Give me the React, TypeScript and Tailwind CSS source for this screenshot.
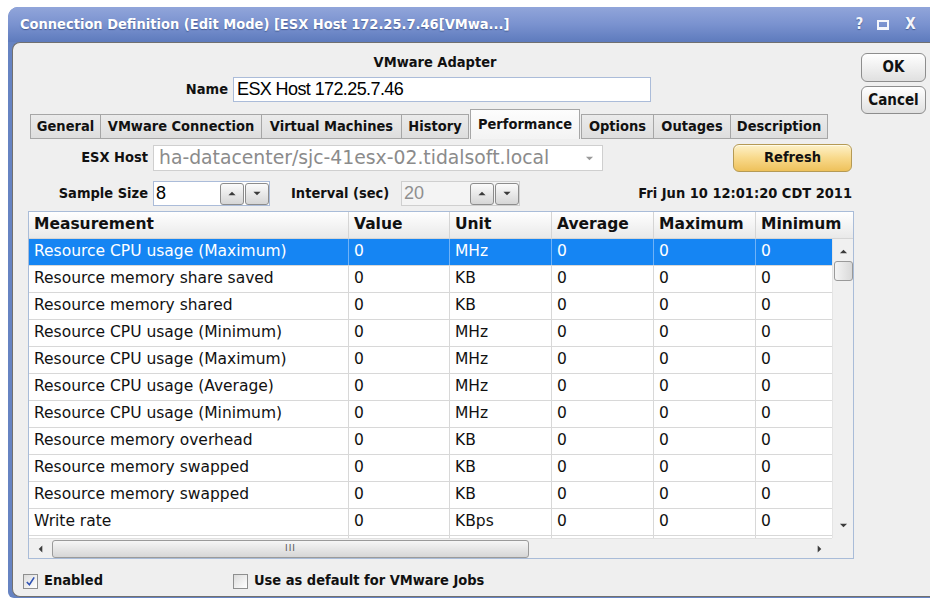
import React from 'react';

const rows: [string, string][] = [
  ['Resource CPU usage (Maximum)', 'MHz'],
  ['Resource memory share saved', 'KB'],
  ['Resource memory shared', 'KB'],
  ['Resource CPU usage (Minimum)', 'MHz'],
  ['Resource CPU usage (Maximum)', 'MHz'],
  ['Resource CPU usage (Average)', 'MHz'],
  ['Resource CPU usage (Minimum)', 'MHz'],
  ['Resource memory overhead', 'KB'],
  ['Resource memory swapped', 'KB'],
  ['Resource memory swapped', 'KB'],
  ['Write rate', 'KBps'],
  ['', ''],
];

const tabs = [
  { label: 'General', w: 'w-[71px]' },
  { label: 'VMware Connection', w: 'w-[162px]' },
  { label: 'Virtual Machines', w: 'w-[141px]' },
  { label: 'History', w: 'w-[68px]' },
  { label: 'Performance', w: 'w-[110px]', active: true },
  { label: 'Options', w: 'w-[73px]' },
  { label: 'Outages', w: 'w-[78px]' },
  { label: 'Description', w: 'w-[98px]' },
];

const Tri = ({ dir, className = '' }: { dir: 'up' | 'down' | 'left' | 'right'; className?: string }) => {
  const pts = {
    up: '0,6 5,1 10,6',
    down: '0,1 5,6 10,1',
    left: '6,0 1,5 6,10',
    right: '1,0 6,5 1,10',
  }[dir];
  const box = dir === 'up' || dir === 'down' ? '0 0 10 7' : '0 0 7 10';
  return (
    <svg viewBox={box} className={className}>
      <polygon points={pts} fill="currentColor" />
    </svg>
  );
};

const SpinButton = ({ dir }: { dir: 'up' | 'down' }) => (
  <div className="w-[24px] h-[22px] rounded-[3px] border border-[#8c8c8c] bg-gradient-to-b from-[#fbfbfb] to-[#d6d6d6] flex items-center justify-center text-[#3a3a3a]">
    <Tri dir={dir} className="w-[8px] h-[5px]" />
  </div>
);

const Checkbox = ({ checked }: { checked?: boolean }) => (
  <div className="w-[15px] h-[15px] border border-[#8e8f8f] bg-gradient-to-br from-[#dcdcdc] to-[#ffffff] flex items-center justify-center">
    {checked && (
      <svg viewBox="0 0 12 12" className="w-[11px] h-[11px]">
        <path d="M2 6.5 L4.8 9.5 L10 1.5" fill="none" stroke="#3154b4" strokeWidth="1.8" />
      </svg>
    )}
  </div>
);

export default function App() {
  const ui = "font-['DejaVu_Sans_Condensed',sans-serif]";
  const label = 'font-bold text-[14.5px] text-[#111]';
  return (
    <div className={`w-[930px] h-[600px] bg-white overflow-hidden ${ui}`}>
      <div className="ml-[8px] mt-[7px] w-[940px] h-[591px] rounded-tl-[10px] rounded-bl-[6px] bg-[#6683c2] flex flex-col overflow-hidden">
        {/* title bar */}
        <div className="h-[35px] shrink-0 bg-gradient-to-b from-[#91a5da] via-[#7a92cf] to-[#5e7bbd] flex items-center pl-[12px] text-white font-bold text-[14.5px] [text-shadow:0_1px_1px_rgba(40,60,110,0.6)]">
          <span>Connection Definition (Edit Mode) [ESX Host 172.25.7.46[VMwa...]</span>
          <div className="ml-[346px] flex items-center text-[15px] text-[#f4f6fb]">
            <span>?</span>
            <span className="ml-[14px] w-[12px] h-[10px] border-[2px] border-[#f4f6fb] border-b-[3px] block" />
            <span className="ml-[16px]">X</span>
          </div>
        </div>

        {/* panel */}
        <div className="ml-[4px] h-[555px] border-l border-t border-b border-[#707070] rounded-l-[8px] bg-[#efefef] flex">
          <div className="w-[844px] shrink-0 flex flex-col">
            <div className={`mt-[11px] text-center leading-[17px] ${label}`}>VMware Adapter</div>

            <div className="mt-[6px] flex items-center h-[25px]">
              <div className={`w-[215px] text-right ${label}`}>Name</div>
              <div className="ml-[5px] w-[418px] h-[25px] bg-white border border-[#abbcd9] flex items-center pl-[3px] font-['Liberation_Sans',sans-serif] text-[18px] tracking-[-0.6px] text-black">
                ESX Host 172.25.7.46
              </div>
            </div>

            {/* tabs */}
            <div className="mt-[7px] ml-[18px] h-[30px] flex items-end">
              {tabs.map((t) =>
                t.active ? (
                  <div
                    key={t.label}
                    className={`${t.w} h-[30px] ml-[1px] mr-[2px] bg-gradient-to-b from-[#fdfdfd] to-[#f3f3f3] border border-b-0 border-[#a6a6a6] flex items-start justify-center pt-[4px] ${label}`}
                  >
                    {t.label}
                  </div>
                ) : (
                  <div
                    key={t.label}
                    className={`${t.w} h-[25px] bg-gradient-to-b from-[#ebebeb] to-[#dedede] border border-[#a6a6a6] -ml-[1px] flex items-center justify-center ${label}`}
                  >
                    {t.label}
                  </div>
                )
              )}
            </div>

            {/* ESX host row */}
            <div className="mt-[5px] h-[28px] flex items-center">
              <div className={`w-[135px] text-right ${label}`}>ESX Host</div>
              <div className="ml-[5px] w-[450px] h-[26px] bg-white border border-[#cfcfcf] flex items-center pl-[5px] pr-[8px] font-['DejaVu_Sans',sans-serif] text-[18.8px] text-[#8b8b8b]">
                <span>ha-datacenter/sjc-41esx-02.tidalsoft.local</span>
                <Tri dir="down" className="ml-auto text-[#9a9a9a] w-[9px] h-[5px]" />
              </div>
              <div className={`ml-auto mr-[5px] w-[119px] h-[28px] rounded-[6px] border border-[#b59a55] bg-gradient-to-b from-[#fdf1c8] via-[#f8d98a] to-[#eec15a] flex items-center justify-center shadow-[inset_0_1px_0_#fffbe8] ${label}`}>
                Refresh
              </div>
            </div>

            {/* sample size row */}
            <div className="mt-[9px] h-[25px] flex items-center">
              <div className={`w-[135px] text-right ${label}`}>Sample Size</div>
              <div className="ml-[5px] w-[117px] h-[25px] bg-white border border-[#abbcd9] flex items-center pl-[2px] font-['Liberation_Sans',sans-serif] text-[18px] text-black">
                <span>8</span>
                <div className="ml-auto flex gap-[1px]">
                  <SpinButton dir="up" />
                  <SpinButton dir="down" />
                </div>
              </div>
              <div className={`ml-[21px] w-[105px] ${label}`}>Interval (sec)</div>
              <div className="ml-[5px] w-[119px] h-[25px] bg-[#f4f4f4] border border-[#cfcfcf] flex items-center pl-[2px] font-['Liberation_Sans',sans-serif] text-[18px] text-[#8f8f8f]">
                <span>20</span>
                <div className="ml-auto flex gap-[1px]">
                  <SpinButton dir="up" />
                  <SpinButton dir="down" />
                </div>
              </div>
              <div className={`ml-auto mr-[5px] ${label}`}>Fri Jun 10 12:01:20 CDT 2011</div>
            </div>

            {/* measurement table */}
            <div className="mt-[5px] ml-[15px] w-[826px] h-[348px] border border-[#a9bcd8] bg-white flex flex-col font-['DejaVu_Sans',sans-serif]">
              <div className="h-[27px] shrink-0 flex bg-gradient-to-b from-[#ffffff] to-[#e9e9e9] border-b border-[#d5d5d5] font-bold text-[15.5px] text-[#111]">
                <div className="w-[320px] pl-[5px] flex items-center border-r border-[#d5d5d5]">Measurement</div>
                <div className="w-[101px] pl-[5px] flex items-center border-r border-[#d5d5d5]">Value</div>
                <div className="w-[102px] pl-[5px] flex items-center border-r border-[#d5d5d5]">Unit</div>
                <div className="w-[102px] pl-[5px] flex items-center border-r border-[#d5d5d5]">Average</div>
                <div className="w-[102px] pl-[5px] flex items-center border-r border-[#d5d5d5]">Maximum</div>
                <div className="flex-1 pl-[5px] flex items-center">Minimum</div>
              </div>

              <div className="h-[299px] flex">
                <div className="w-[803px] overflow-hidden">
                  {rows.map(([name, unit], i) => {
                    const sel = i === 0;
                    const cell = `pl-[5px] flex items-center border-r ${sel ? 'border-[#6fb2f7]' : 'border-[#d8d8d8]'}`;
                    const v = name ? '0' : '';
                    return (
                      <div
                        key={i}
                        className={`h-[27px] flex text-[15.5px] border-b border-[#d8d8d8] ${sel ? 'bg-[#1585f3] text-white' : 'text-[#111]'}`}
                      >
                        <div className={`w-[320px] ${cell}`}>{name}</div>
                        <div className={`w-[101px] ${cell}`}>{v}</div>
                        <div className={`w-[102px] ${cell}`}>{unit}</div>
                        <div className={`w-[102px] ${cell}`}>{v}</div>
                        <div className={`w-[102px] ${cell}`}>{v}</div>
                        <div className="w-[76px] pl-[5px] flex items-center">{v}</div>
                      </div>
                    );
                  })}
                </div>
                {/* vertical scrollbar */}
                <div className="w-[21px] bg-[#f0f0f0] border-l border-[#e4e4e4] flex flex-col items-center">
                  <Tri dir="up" className="mt-[10px] text-[#3c3c3c] w-[9px] h-[5px]" />
                  <div className="mt-[7px] w-[19px] h-[20px] rounded-[3px] border border-[#9a9a9a] bg-gradient-to-r from-[#f4f4f4] to-[#d9d9d9]" />
                  <Tri dir="down" className="mt-auto mb-[10px] text-[#3c3c3c] w-[9px] h-[5px]" />
                </div>
              </div>

              {/* horizontal scrollbar */}
              <div className="h-[20px] flex">
                <div className="w-[803px] bg-[#f0f0f0] border-t border-[#e0e0e0] flex items-center">
                  <Tri dir="left" className="ml-[9px] text-[#3c3c3c] w-[5px] h-[8px]" />
                  <div className="ml-[9px] w-[477px] h-[18px] rounded-[3px] border border-[#9a9a9a] bg-gradient-to-b from-[#f6f6f6] to-[#d6d6d6] flex items-center justify-center">
                    <span className="text-[9px] tracking-[1px] text-[#555] leading-none">III</span>
                  </div>
                  <Tri dir="right" className="ml-auto mr-[10px] text-[#3c3c3c] w-[5px] h-[8px]" />
                </div>
                <div className="flex-1 bg-[#f0f0f0]" />
              </div>
            </div>

            {/* checkboxes */}
            <div className="mt-[13px] h-[18px] flex items-center">
              <div className="ml-[10px]"><Checkbox checked /></div>
              <span className={`ml-[6px] ${label}`}>Enabled</span>
              <div className="ml-[130px]"><Checkbox /></div>
              <span className={`ml-[6px] ${label}`}>Use as default for VMware Jobs</span>
            </div>
          </div>

          {/* OK / Cancel */}
          <div className="flex flex-col ml-[4px] mt-[10px] gap-[4px]">
            <div className="w-[65px] h-[29px] rounded-[6px] border border-[#8d8d8d] bg-gradient-to-b from-[#ffffff] to-[#e0e0e0] flex items-center justify-center font-bold text-[15px] text-[#111]">OK</div>
            <div className="w-[65px] h-[28px] rounded-[6px] border border-[#8d8d8d] bg-gradient-to-b from-[#ffffff] to-[#e0e0e0] flex items-center justify-center font-bold text-[15px] text-[#111]">Cancel</div>
          </div>
        </div>
      </div>
    </div>
  );
}
